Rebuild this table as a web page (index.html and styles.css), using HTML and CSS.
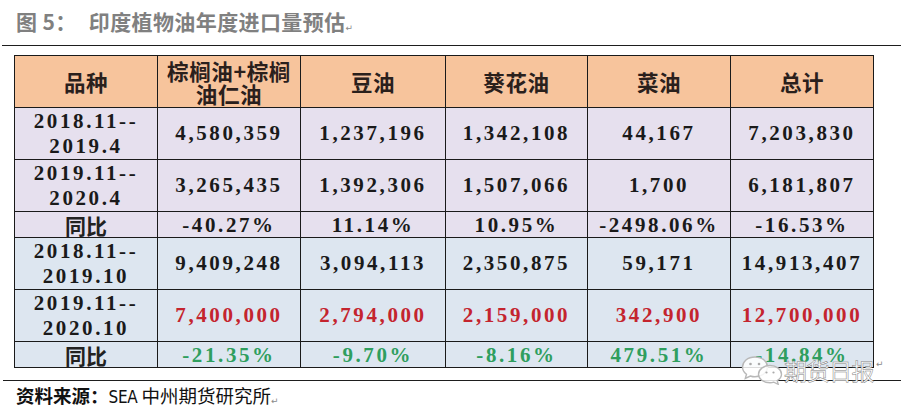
FILE: index.html
```html
<!DOCTYPE html>
<html lang="zh">
<head>
<meta charset="utf-8">
<title>印度植物油年度进口量预估</title>
<link rel="stylesheet" href="styles.css">
</head>
<body>
<div class="page">
  <div class="title"><span class="fig">图 5：</span>印度植物油年度进口量预估<span class="ret">↵</span></div>
  <div class="rule"></div>
  <table class="grid">
    <colgroup>
      <col class="c1"><col class="c2"><col class="c3"><col class="c4"><col class="c5"><col class="c6">
    </colgroup>
    <thead>
      <tr class="head">
        <th>品种</th>
        <th>棕榈油+棕榈<br>油仁油</th>
        <th>豆油</th>
        <th>葵花油</th>
        <th>菜油</th>
        <th>总计</th>
      </tr>
    </thead>
    <tbody class="lav">
      <tr class="tall">
        <td class="date">2018.11--<br>2019.4</td>
        <td>4,580,359</td><td>1,237,196</td><td>1,342,108</td><td>44,167</td><td>7,203,830</td>
      </tr>
      <tr class="tall">
        <td class="date">2019.11--<br>2020.4</td>
        <td>3,265,435</td><td>1,392,306</td><td>1,507,066</td><td>1,700</td><td>6,181,807</td>
      </tr>
      <tr class="short">
        <td class="cjk">同比</td>
        <td>-40.27%</td><td>11.14%</td><td>10.95%</td><td>-2498.06%</td><td>-16.53%</td>
      </tr>
    </tbody>
    <tbody class="blue">
      <tr class="tall">
        <td class="date">2018.11--<br>2019.10</td>
        <td>9,409,248</td><td>3,094,113</td><td>2,350,875</td><td>59,171</td><td>14,913,407</td>
      </tr>
      <tr class="tall red">
        <td class="date">2019.11--<br>2020.10</td>
        <td>7,400,000</td><td>2,794,000</td><td>2,159,000</td><td>342,900</td><td>12,700,000</td>
      </tr>
      <tr class="short green">
        <td class="cjk">同比</td>
        <td>-21.35%</td><td>-9.70%</td><td>-8.16%</td><td>479.51%</td><td>-14.84%</td>
      </tr>
    </tbody>
  </table>
  <div class="rule rule-bottom"></div>
  <div class="source"><span class="src-label">资料来源：</span><span class="src-latin">SEA</span> 中州期货研究所<span class="ret">↵</span></div>

  <div class="watermark">
    <svg class="wx" width="44" height="30" viewBox="0 0 44 30" aria-hidden="true">
      <path d="M14 2 C6.5 2 1.5 6.8 1.5 12 C1.5 15 3 17.5 5.5 19.3 L4.3 23.5 L9.3 21 C10.8 21.5 12.4 21.8 14 21.8 C21.5 21.8 26.5 17 26.5 12 C26.5 6.8 21.5 2 14 2 Z" fill="#fff" fill-opacity="0.85" stroke="#b8b8b8" stroke-width="1.4"/>
      <path d="M29 10.5 C22.5 10.5 17.5 14.5 17.5 19.2 C17.5 23.9 22.5 27.8 29 27.8 C30.3 27.8 31.6 27.6 32.8 27.2 L37.2 29.3 L36.2 25.6 C38.8 24 40.5 21.7 40.5 19.2 C40.5 14.5 35.5 10.5 29 10.5 Z" fill="#fff" fill-opacity="0.85" stroke="#b8b8b8" stroke-width="1.4"/>
      <circle cx="9.5" cy="9" r="1.3" fill="#aaa"/>
      <circle cx="18" cy="9" r="1.3" fill="#aaa"/>
      <circle cx="25.5" cy="17.5" r="1.1" fill="#aaa"/>
      <circle cx="32.5" cy="17.5" r="1.1" fill="#aaa"/>
    </svg>
    <span class="wm-text">期货日报</span><span class="ret wm-ret">↵</span>
  </div>
</div>
</body>
</html>
```
FILE: styles.css
```css
html, body {
  margin: 0;
  padding: 0;
  background: #ffffff;
}

.page {
  position: relative;
  width: 901px;
  height: 411px;
  overflow: hidden;
  font-family: "Noto Sans CJK SC", "Liberation Sans", sans-serif;
}

.title {
  box-sizing: border-box;
  height: 45px;
  padding: 8px 0 0 16px;
  font-family: "Noto Sans CJK SC", sans-serif;
  font-weight: 700;
  font-size: 21px;
  line-height: 26px;
  color: #808080;
  letter-spacing: 0.4px;
}

.title .fig {
  margin-right: 12px;
}

.ret {
  font-family: "DejaVu Sans", sans-serif;
  font-weight: 400;
  font-size: 9px;
  color: #8a8a8a;
  letter-spacing: 0;
  vertical-align: -1px;
}

.rule {
  margin-left: 2px;
  height: 0;
  border-top: 1.5px solid #1e1e1e;
}

.grid {
  margin: 9px 0 0 14px;
  width: 859px;
  table-layout: fixed;
  border-collapse: collapse;
  font-family: "Liberation Serif", "Noto Sans CJK SC", serif;
  font-weight: 700;
  font-size: 21px;
  color: #1a1a1a;
  letter-spacing: 2.6px;
}

.c1 { width: 143px; }
.c2 { width: 143px; }
.c3 { width: 145px; }
.c4 { width: 142px; }
.c5 { width: 143px; }
.c6 { width: 143px; }

.grid th,
.grid td {
  border: 1px solid #1a1a1a;
  padding: 0;
  text-align: center;
  vertical-align: middle;
}

.grid th {
  background: #f7c49c;
  font-family: "Noto Sans CJK SC", sans-serif;
  font-weight: 700;
  font-size: 21.5px;
  line-height: 23px;
  letter-spacing: 0.6px;
  color: #2a201c;
}

.head { height: 52px; }
.tall { height: 52px; }
.short { height: 26px; }

.tall td { line-height: 25px; }
.short td { line-height: 20px; }

.lav td { background: #e6e0ee; }
.blue td { background: #dde6f0; }

.grid .cjk {
  font-family: "Noto Sans CJK SC", sans-serif;
  font-weight: 700;
  font-size: 21px;
  letter-spacing: 0;
  color: #222;
}

.red td { color: #c4242e; }
.red td.date { color: #1a1a1a; }

.green td { color: #2f9e5e; }
.green td.cjk { color: #222; }

.rule-bottom {
  margin-top: 12px;
  margin-left: 3px;
}

.source {
  padding: 3px 0 0 16px;
  font-family: "Noto Sans CJK SC", sans-serif;
  font-size: 18.5px;
  line-height: 22px;
  color: #111;
}

.src-label {
  font-weight: 700;
}

.src-latin {
  font-family: "DejaVu Sans Condensed", "Liberation Sans", sans-serif;
  font-size: 17px;
  letter-spacing: -0.3px;
}

.watermark {
  position: absolute;
  left: 741px;
  top: 355px;
  display: flex;
  align-items: center;
}

.wx {
  display: block;
}

.wm-text {
  margin-left: -1px;
  font-family: "Noto Sans CJK SC", sans-serif;
  font-weight: 400;
  font-size: 23px;
  line-height: 28px;
  color: #ffffff;
  -webkit-text-stroke: 0.5px #808080;
  letter-spacing: -0.5px;
}

.wm-ret {
  align-self: flex-start;
  margin-left: 2px;
  margin-top: 4px;
}
```
